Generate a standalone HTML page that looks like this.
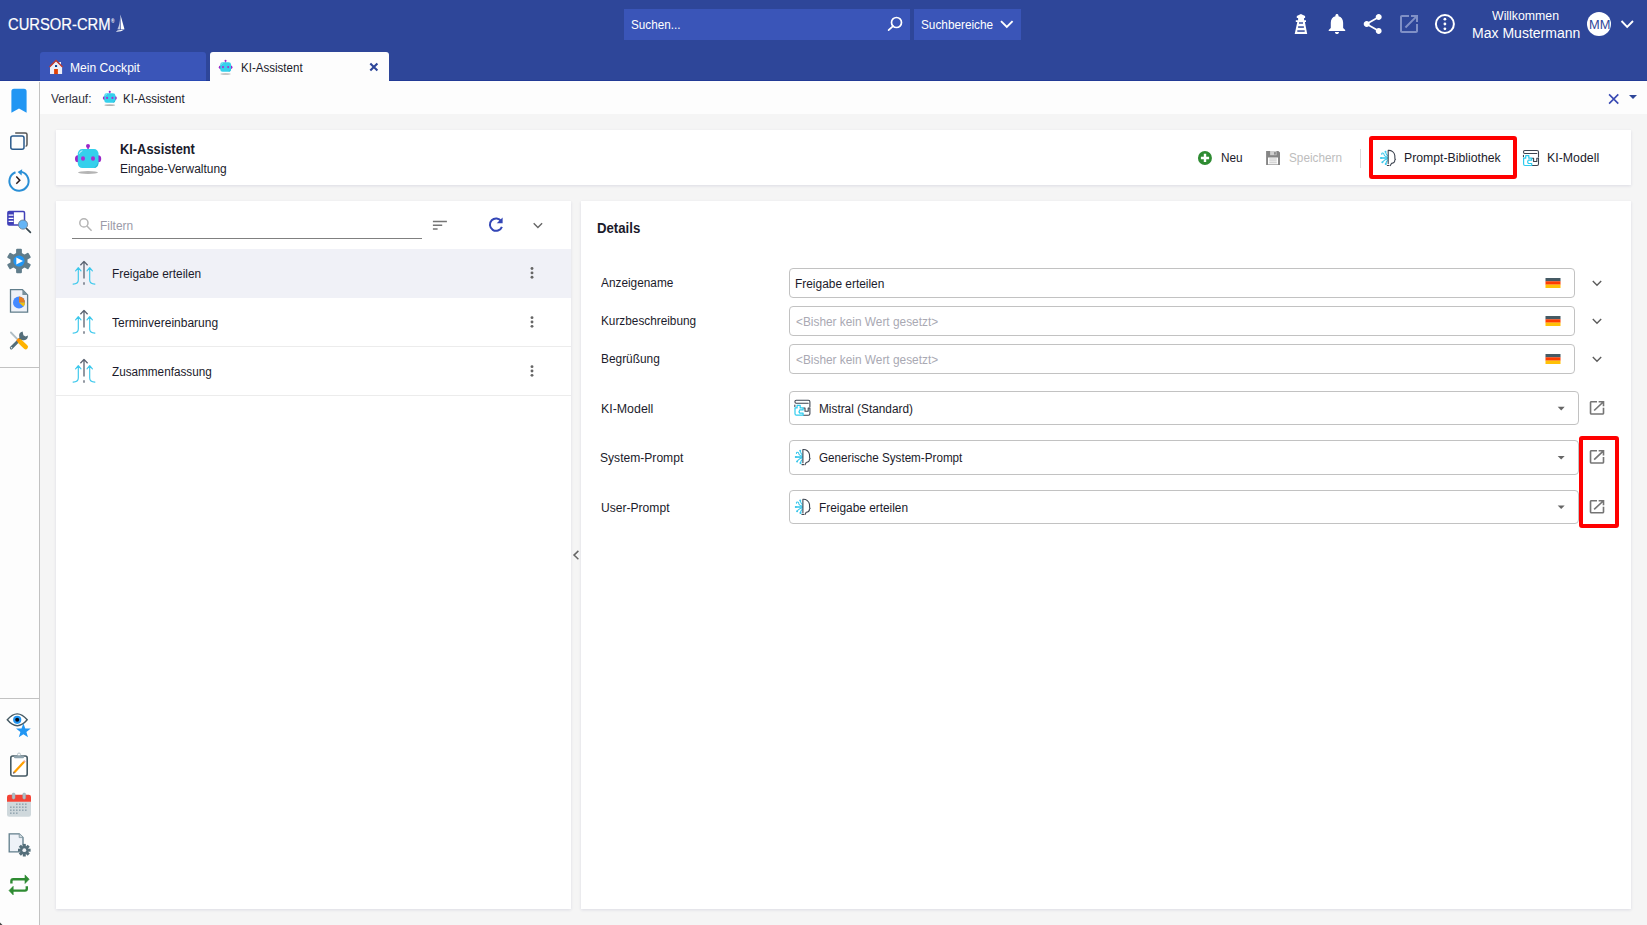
<!DOCTYPE html>
<html lang="de">
<head>
<meta charset="utf-8">
<title>CURSOR-CRM – KI-Assistent</title>
<style>
*{box-sizing:border-box;margin:0;padding:0}
html,body{width:1647px;height:925px;overflow:hidden}
body{font-family:"Liberation Sans",sans-serif;font-size:12.5px;color:#1b1b2b;background:#f5f5f5;position:relative}
.a{position:absolute}
.t{position:absolute;white-space:nowrap;line-height:20px;height:20px;transform-origin:0 0}
#ic{position:absolute;left:0;top:0;overflow:visible}
.inp{position:absolute;left:789px;border:1px solid #c2c2c2;border-radius:4px;background:#fff}
.pan{position:absolute;background:#fff;box-shadow:0 1px 3px rgba(20,20,90,.11)}
.red{position:absolute;border:4px solid #ff0000;border-radius:3px}
</style>
</head>
<body>
<div class="a" style="left:0;top:0;width:1647px;height:81px;background:#2e4699"></div>
<div class="a" style="left:624px;top:9px;width:286px;height:31px;background:#3a55b8"></div>
<div class="a" style="left:914px;top:9px;width:107px;height:31px;background:#3a55b8"></div>
<div class="a" style="left:1587.25px;top:12px;width:24px;height:24px;border-radius:50%;background:#fff"></div>
<div class="a" style="left:40px;top:52px;width:166px;height:29px;background:#3a55b8;border-radius:3px 3px 0 0"></div>
<div class="a" style="left:0;top:80px;width:1647px;height:1px;background:#223b96"></div>
<div class="a" style="left:40px;top:80px;width:166px;height:1px;background:#2a4ab4"></div>
<div class="a" style="left:210px;top:52px;width:179px;height:29px;background:#fdfdfd;border-radius:3px 3px 0 0"></div>
<div class="a" style="left:0;top:81px;width:39px;height:844px;background:#fdfdfd"></div>
<div class="a" style="left:39px;top:81px;width:1px;height:844px;background:#fdfdfd"></div>
<div class="a" style="left:39px;top:82px;width:1px;height:843px;background:#c2c2c2"></div>
<div class="a" style="left:0;top:367px;width:39px;height:1px;background:#c2c2c2"></div>
<div class="a" style="left:0;top:698px;width:39px;height:1px;background:#c2c2c2"></div>
<div class="a" style="left:40px;top:81px;width:1607px;height:32.7px;background:#fdfdfd"></div>
<div class="pan" style="left:56px;top:130px;width:1575px;height:55px"></div>
<div class="a" style="left:1360px;top:148.5px;width:1px;height:19px;background:#dcdcdc"></div>
<div class="pan" style="left:56px;top:201px;width:515px;height:708px"></div>
<div class="a" style="left:72.25px;top:238px;width:349.75px;height:1px;background:#808080"></div>
<div class="a" style="left:56px;top:249px;width:515px;height:49px;background:#f0f1f7"></div>
<div class="a" style="left:56px;top:346px;width:515px;height:1px;background:#ececec"></div>
<div class="a" style="left:56px;top:395px;width:515px;height:1px;background:#ececec"></div>
<div class="pan" style="left:581px;top:201px;width:1050px;height:708px"></div>
<div class="inp" style="top:268px;width:786px;height:30px"></div>
<div class="inp" style="top:306px;width:786px;height:30px"></div>
<div class="inp" style="top:344px;width:786px;height:30px"></div>
<div class="inp" style="top:391px;width:790px;height:34px"></div>
<div class="inp" style="top:440px;width:790px;height:34.5px"></div>
<div class="inp" style="top:490px;width:790px;height:34px"></div>
<div class="red" style="left:1368.5px;top:135.5px;width:148.75px;height:43.1px"></div>
<div class="red" style="left:1578.8px;top:435.7px;width:40.7px;height:92.7px"></div>
<div class="t" style="left:111px;top:12px;font-size:4.8px;font-weight:bold;color:#fff">®</div>

<svg id="ic" width="1647" height="925" viewBox="0 0 1647 925">
<defs>
<g id="bot">
 <ellipse cx="13" cy="28.5" rx="10" ry="1.5" fill="#b4b4b4"/>
 <rect x="12.3" y="2" width="1.5" height="4" fill="#9b27c8"/>
 <circle cx="13" cy="2.1" r="2" fill="#9b27c8"/>
 <ellipse cx="2.9" cy="14.7" rx="2.9" ry="3.5" fill="#9b27c8"/>
 <ellipse cx="23.3" cy="14.7" rx="2.9" ry="3.5" fill="#9b27c8"/>
 <rect x="2.8" y="5.1" width="20.7" height="18.9" rx="4.5" fill="#35d0ec"/>
 <path d="M18.5 24 Q23.5 23.5 23.5 17 Q22.5 22 18.5 24Z" fill="#27b2cf"/>
 <path d="M4.4 9.3 Q5 7.2 7 6.8" stroke="#fff" stroke-width="0.9" fill="none" stroke-linecap="round" opacity=".85"/>
 <ellipse cx="8" cy="14.45" rx="2" ry="2.2" fill="#a82fd0"/>
 <ellipse cx="18" cy="14.45" rx="2" ry="2.2" fill="#a82fd0"/>
</g>
<g id="prompt" fill="none" stroke-linecap="round" stroke-linejoin="round">
 <path d="M8 8 L1.4 8 M8 7 Q5.5 6.8 4.6 5 Q4.6 3 3 3.1 Q1.9 3.4 2.3 4.4 M8 9 Q5.5 9.2 3.4 11.6 M2.8 12.3 h0.1 M8 5.5 Q6.6 4.4 6.2 2.3 M6 1.6 h0.1 M8 10.5 Q6.8 11.6 6.4 13.3 M6.3 14.1 h0.1" stroke="#3cc8ec" stroke-width="1.05"/>
 <path d="M1.4 8 H7.6" stroke="#3cc8ec" stroke-width="1.5" opacity=".8"/>
 <circle cx="1.6" cy="8" r="1" fill="#3cc8ec" stroke="none"/><circle cx="2.9" cy="12.3" r="1" fill="#3cc8ec" stroke="none"/><circle cx="6" cy="1.7" r="1" fill="#3cc8ec" stroke="none"/><circle cx="6.3" cy="14" r="1.1" fill="#3cc8ec" stroke="none"/>
 <path d="M8.7 0.4 V13.6 M7.8 15.5 H9.4 M8.7 0.4 C12 0.1 15 2.4 15.3 5.5 L15.4 8.6 L15.9 9.6 L15.3 10 C15.4 12.2 14.5 13.2 12 13.4 L10.8 15.6" stroke="#3d4450" stroke-width="1.1"/>
</g>
<g id="kim" fill="none" stroke-linecap="round" stroke-linejoin="round" stroke-width="1.1">
 <path d="M2.3 1 H14.5 Q16 1 16 2.5 V7.5 M2.3 1 Q1 1 1 2.5 Q1 4 2.3 4 H14.3 M0.95 5.9 V7.3 M16 8.8 H14.3 V12 H11.1 V8.8 H9.7 M16 8.8 V14.5 Q16 16 14.5 16 H9.7" stroke="#3d4450"/>
 <path d="M1.1 8.7 H3.2 V6.1 H6.3 V8.7 H9.2 V10.7 H5.9 Q4.5 12.3 5.9 14 H9.2 V16 H2.5 Q1.1 16 1.1 14.5 Z" stroke="#2ecbee" stroke-width="1.2"/>
</g>
<g id="arrows" fill="none" stroke-linecap="round" stroke-linejoin="round">
 <path d="M5.6 7.2 V19 Q5.6 23 0.4 23.1 M2.9 9.8 L5.6 6.6 L8.3 9.8 M17 7.2 V19 Q17 23 22.2 23.1 M14.3 9.8 L17 6.6 L19.7 9.8" stroke="#3cc8ec" stroke-width="1.15"/>
 <path d="M11.3 1 V17.6 M11.3 21.2 V23.8 M7.7 4.3 L11.3 0.4 L14.9 4.3" stroke="#5a6270" stroke-width="1.3" stroke-linecap="butt"/>
</g>
<g id="oin"><path d="M19 19H5V5h7V3H5c-1.11 0-2 .9-2 2v14c0 1.1.89 2 2 2h14c1.1 0 2-.9 2-2v-7h-2v7zM14 3v2h3.59l-9.83 9.83 1.41 1.41L19 6.41V10h2V3h-7z"/></g>
<g id="flag"><rect width="15" height="3.4" fill="#455a64"/><rect y="3.3" width="15" height="3.4" fill="#ff3d00"/><rect y="6.6" width="15" height="3.4" fill="#ffc107"/></g>
<g id="dots" fill="#666"><circle cx="0" cy="-4.35" r="1.45"/><circle cx="0" cy="0" r="1.45"/><circle cx="0" cy="4.35" r="1.45"/></g>
</defs>

<!-- logo: registered mark + sailboat -->
<path d="M120.4 14.4 L124.4 29.1 L121 29.6 Z" fill="#fff"/>
<path d="M120.1 17.5 Q119.8 25 117.4 29.2 L120.4 29.5 Z" fill="#fff" opacity=".7"/>
<path d="M115.9 31.7 Q121 31.8 125 29.2 Q121 30.3 117.5 30.5 Z" fill="#fff"/>

<!-- search icon + chevrons -->
<g fill="none" stroke="#fff" stroke-width="1.7"><circle cx="896.5" cy="22.5" r="5"/><path d="M893 26.1 L888.6 30.2" stroke-linecap="round"/></g>
<path d="M1001 21.2 L1006.8 27 L1012.6 21.2" fill="none" stroke="#fff" stroke-width="1.9"/>
<path d="M1621.5 21 L1627.2 26.8 L1633 21" fill="none" stroke="#fff" stroke-width="1.9"/>

<!-- header icons -->
<g fill="#fff">
 <path d="M1300.9 13.9 L1305.1 16 V18 H1304.1 V20.2 H1306 V22 H1304.9 L1307.2 33.9 H1294.7 L1297.3 22 H1295.8 V20.2 H1298.1 V18 H1296.8 V16 Z"/>
</g>
<g fill="#2e4699"><rect x="1299" y="22.3" width="4" height="1.4"/><rect x="1298.1" y="26.3" width="5.8" height="1.5"/><rect x="1297.3" y="30.3" width="7.4" height="1.5"/></g>
<g transform="translate(1324.6 11.4) scale(1.03)" fill="#fff"><path d="M12 22c1.1 0 2-.9 2-2h-4c0 1.1.89 2 2 2zm6-6v-5c0-3.07-1.64-5.64-4.5-6.32V4c0-.83-.67-1.5-1.5-1.5s-1.5.67-1.5 1.5v.68C7.63 5.36 6 7.92 6 11v5l-2 2v1h16v-1l-2-2z"/></g>
<g transform="translate(1360.7 12)" fill="#fff"><path d="M18 16.08c-.76 0-1.44.3-1.96.77L8.910 12.700c.05-.23.09-.46.09-.7s-.04-.47-.09-.7l7.050-4.110c.54.5 1.250.810 2.040.810 1.660 0 3-1.340 3-3s-1.340-3-3-3-3 1.340-3 3c0 .24.040.47.090.7L8.040 9.810C7.500 9.310 6.790 9 6 9c-1.660 0-3 1.340-3 3s1.340 3 3 3c.79 0 1.500-.31 2.040-.81l7.120 4.160c-.05.21-.08.43-.08.65 0 1.610 1.310 2.920 2.920 2.920 1.610 0 2.920-1.310 2.920-2.920s-1.310-2.920-2.920-2.920z"/></g>
<g transform="translate(1397 11.9)" fill="#8090c6"><use href="#oin"/></g>
<circle cx="1444.9" cy="24" r="9" fill="none" stroke="#fff" stroke-width="2"/>
<g fill="#fff"><circle cx="1444.9" cy="19.2" r="1.4"/><circle cx="1444.9" cy="24" r="1.4"/><circle cx="1444.9" cy="28.8" r="1.4"/></g>

<!-- tab icons -->
<g>
 <path d="M50 66.8 L56 61 L62.1 66.8 V74.1 H50 Z" fill="#ecedf8"/>
 <rect x="59.2" y="62" width="1.8" height="3" fill="#ecedf8"/>
 <path d="M49.5 66.9 L56 60.5 L62.6 66.9" fill="none" stroke="#c23a2e" stroke-width="1.4" stroke-linejoin="miter"/>
 <rect x="55" y="65.1" width="2.1" height="1.9" fill="#003c8f"/>
 <rect x="54.1" y="69" width="3.8" height="5.1" fill="#e04006"/>
</g>
<use href="#bot" transform="translate(218.8 59.8) scale(0.52 0.50)"/>
<path d="M370.3 63.6 L377.4 70.6 M377.4 63.6 L370.3 70.6" stroke="#2e4699" stroke-width="2.1"/>
<use href="#bot" transform="translate(102.8 90.6) scale(0.535 0.51)"/>
<path d="M1609.1 94.4 L1618.3 103.6 M1618.3 94.4 L1609.1 103.6" stroke="#3849b3" stroke-width="1.6"/>
<path d="M1629 94.9 H1637 L1633 98.9 Z" fill="#2e4699"/>

<!-- card -->
<use href="#bot" transform="translate(75 144)"/>
<circle cx="1204.95" cy="157.95" r="7" fill="#2e8b32"/>
<path d="M1200.9 157.95 H1209.1 M1205 153.85 V162.05" stroke="#fff" stroke-width="2.4"/>
<g>
 <path d="M1266.1 151 H1278.4 L1280 152.6 V164.9 H1266.1 Z" fill="#858585"/>
 <rect x="1270.1" y="151" width="6.4" height="4.2" fill="#cfcfcf"/>
 <rect x="1274.3" y="152.1" width="1.3" height="2.5" fill="#707070"/>
 <rect x="1268" y="157.5" width="10" height="6.9" fill="#fff"/>
 <path d="M1269.3 159 H1276.8 M1269.3 160.9 H1276.8 M1269.3 162.8 H1276.8" stroke="#bdbdbd" stroke-width="0.9"/>
</g>
<use href="#prompt" transform="translate(1379.5 150)"/>
<use href="#kim" transform="translate(1522.5 149.5)"/>

<!-- left panel -->
<g fill="none" stroke="#b4b4b4" stroke-width="1.5"><circle cx="83.9" cy="222.9" r="4.1"/><path d="M86.9 226 L91.6 230.7" stroke-linecap="butt"/></g>
<path d="M432.9 221.6 H446.9 M432.9 225.3 H442.2 M432.9 229 H437.6" stroke="#757575" stroke-width="1.5"/>
<g fill="none" stroke="#3346b6" stroke-width="2"><path d="M501.3 221.2 A6.2 6.2 0 1 0 501.9 226.8"/></g>
<path d="M502.6 217.4 V223.3 H496.7 Z" fill="#3346b6"/>
<path d="M533.7 223.2 L537.9 227.4 L542.1 223.2" fill="none" stroke="#666" stroke-width="1.4"/>
<use href="#arrows" transform="translate(72.7 261)"/>
<use href="#arrows" transform="translate(72.7 310)"/>
<use href="#arrows" transform="translate(72.7 359)"/>
<use href="#dots" transform="translate(532 272.9)"/>
<use href="#dots" transform="translate(532 322)"/>
<use href="#dots" transform="translate(532 371)"/>
<path d="M578.4 550.9 L574 555.1 L578.4 559.3" fill="none" stroke="#666" stroke-width="1.5"/>

<!-- right panel -->
<use href="#flag" transform="translate(1545.5 278)"/>
<use href="#flag" transform="translate(1545.5 316)"/>
<use href="#flag" transform="translate(1545.5 354)"/>
<g fill="none" stroke="#5c5c5c" stroke-width="1.4">
 <path d="M1592.8 281.1 L1597 285.3 L1601.2 281.1"/>
 <path d="M1592.8 319.1 L1597 323.3 L1601.2 319.1"/>
 <path d="M1592.8 357.1 L1597 361.3 L1601.2 357.1"/>
</g>
<g fill="#666">
 <path d="M1557.7 406.8 H1564.7 L1561.2 410.4 Z"/>
 <path d="M1557.7 456 H1564.7 L1561.2 459.6 Z"/>
 <path d="M1557.7 505.4 H1564.7 L1561.2 509 Z"/>
</g>
<g fill="#757575">
 <use href="#oin" transform="translate(1587.3 398.7) scale(0.81 0.76)"/>
 <use href="#oin" transform="translate(1587.3 447.8) scale(0.81 0.76)"/>
 <use href="#oin" transform="translate(1587.3 497.6) scale(0.81 0.76)"/>
</g>
<use href="#kim" transform="translate(793.9 399.2)"/>
<use href="#prompt" transform="translate(794.2 449.1)"/>
<use href="#prompt" transform="translate(794.2 498.9)"/>

<!-- sidebar icons -->
<path d="M11.4 91.4 Q11.4 88.8 14 88.8 H24 Q26.6 88.8 26.6 91.4 V112.7 L19 108.4 L11.4 112.7 Z" fill="#2196f3"/>
<g fill="none" stroke-width="1.5">
 <path d="M15.2 132.9 H25.3 Q27 132.9 27 134.6 V144.5 Q27 146.2 25.6 146.2" stroke="#555"/>
 <rect x="10.8" y="135.9" width="13.2" height="13.3" rx="2" stroke="#2a5a8c"/>
</g>
<g fill="none">
 <path d="M15.5 172.2 A9.6 9.6 0 1 0 21.6 171.9" stroke="#2a8fd6" stroke-width="2"/>
 <path d="M22.2 169.2 L17.6 172 L21.6 175.6 Z" fill="#2a8fd6"/>
 <path d="M16.3 176.6 L19.8 180.2 L16.3 183.8" stroke="#2b1a1a" stroke-width="1.5"/>
</g>
<g>
 <rect x="7.9" y="211.5" width="16.6" height="13.4" rx="1.2" fill="#fff" stroke="#4040b8" stroke-width="1.5"/>
 <rect x="7.9" y="211.5" width="6" height="13.4" fill="#4040b8"/>
 <path d="M8.6 215.2 H13.4 M8.6 218.3 H13.4 M8.6 221.4 H13.4" stroke="#fff" stroke-width="1.2"/>
 <path d="M26.6 228.6 L30.4 232.4" stroke="#37474f" stroke-width="1.7" stroke-linecap="round"/>
 <circle cx="23" cy="224.6" r="4.6" fill="#64b5f6" stroke="#6d7a85" stroke-width="0.8"/>
</g>
<g transform="translate(19 261)">
 <g fill="#607d8b">
  <circle r="8.6"/>
  <rect x="-2.9" y="-12.2" width="5.8" height="24.4" rx="1"/>
  <rect x="-2.9" y="-12.2" width="5.8" height="24.4" rx="1" transform="rotate(60)"/>
  <rect x="-2.9" y="-12.2" width="5.8" height="24.4" rx="1" transform="rotate(120)"/>
 </g>
 <circle r="5.6" fill="#2196f3"/>
 <path d="M-2.7 -3.6 L4 0 L-2.7 3.6 Z" fill="#fff"/>
</g>
<g>
 <path d="M10.5 289.6 H22.4 L27.6 294.9 V312.2 H10.5 Z" fill="#eef2f8" stroke="#607d8b" stroke-width="1.3"/>
 <path d="M22.4 289.3 L28 295 H22.4 Z" fill="#78909c"/>
 <circle cx="19" cy="302.4" r="6" fill="#448aff"/>
 <path d="M19 302.4 V296.4 A6 6 0 0 1 25 302.4 Z" fill="#e67e22"/>
 <path d="M19 302.4 H25 A6 6 0 0 1 23.4 306.5 Z" fill="#f4c20d"/>
</g>
<g stroke-linecap="round">
 <path d="M11.3 347.9 L21.2 338" stroke="#546e7a" stroke-width="3"/>
 <path d="M27.9 335.6 A4.4 4.4 0 1 1 22.6 331.6 L23.4 335.2 L25.6 336.6 Z" fill="#546e7a"/>
 <circle cx="11.5" cy="347.8" r="0.8" fill="#eceff1"/>
 <path d="M10.9 332.5 L17.6 339.3" stroke="#b0bec5" stroke-width="1.8"/>
 <path d="M19.9 341.5 L25.7 347" stroke="#ffb300" stroke-width="4.6"/>
 <path d="M17.4 339.2 L19.4 341.1" stroke="#ff8f00" stroke-width="3.4" stroke-linecap="butt"/>
</g>
<g>
 <path d="M7.3 719.8 Q17.2 708 27.2 719.8 Q17.2 731.6 7.3 719.8 Z" fill="#fff" stroke="#455a64" stroke-width="1.4"/>
 <circle cx="17.2" cy="719.8" r="4.1" fill="#2196f3"/>
 <circle cx="17.2" cy="719.8" r="2" fill="#0b0b14"/>
 <path d="M23.4 723.2 L25.3 728.4 L30.8 728.6 L26.4 732.0 L28.0 737.3 L23.4 734.2 L18.8 737.3 L20.4 732.0 L16.0 728.6 L21.5 728.4 Z" fill="#2196f3"/>
</g>
<g>
 <rect x="10.8" y="756" width="16.4" height="20" rx="2" fill="#fff" stroke="#455a64" stroke-width="1.6"/>
 <circle cx="19" cy="754.5" r="1.5" fill="#fdfdfd" stroke="#b0bec5" stroke-width="0.9"/>
 <rect x="14" y="755.5" width="10" height="2.8" rx="1" fill="#90a4ae"/>
 <path d="M13.6 771.6 L23.3 761 L24.9 762.5 L15.2 773 Z" fill="#ffa000"/>
 <path d="M13.6 771.6 L15.2 773 L13 773.8 Z" fill="#5d4037"/>
 <path d="M23.3 761 L24.1 760.1 L25.7 761.6 L24.9 762.5 Z" fill="#ef9a9a"/>
</g>
<g>
 <path d="M7 802 H31 V814.6 Q31 816.8 28.8 816.8 H9.2 Q7 816.8 7 814.6 Z" fill="#cfd8dc"/>
 <path d="M7 797 Q7 794.8 9.2 794.8 H28.8 Q31 794.8 31 797 V802 H7 Z" fill="#f44336"/>
 <rect x="7" y="801.6" width="24" height="0.6" fill="#e0f2f1" opacity=".6"/>
 <rect x="12.1" y="793" width="3" height="6.2" rx="1.4" fill="#b0bec5" stroke="#90a4ae" stroke-width="0.4"/>
 <rect x="22.7" y="793" width="3" height="6.2" rx="1.4" fill="#b0bec5" stroke="#90a4ae" stroke-width="0.4"/>
 <g fill="#90a4ae"><rect x="16.05" y="803.45" width="1.5" height="1.5"/><rect x="19.05" y="803.45" width="1.5" height="1.5"/><rect x="22.05" y="803.45" width="1.5" height="1.5"/><rect x="25.05" y="803.45" width="1.5" height="1.5"/><rect x="10.05" y="806.45" width="1.5" height="1.5"/><rect x="13.05" y="806.45" width="1.5" height="1.5"/><rect x="16.05" y="806.45" width="1.5" height="1.5"/><rect x="19.05" y="806.45" width="1.5" height="1.5"/><rect x="22.05" y="806.45" width="1.5" height="1.5"/><rect x="25.05" y="806.45" width="1.5" height="1.5"/><rect x="10.05" y="809.45" width="1.5" height="1.5"/><rect x="13.05" y="809.45" width="1.5" height="1.5"/><rect x="16.05" y="809.45" width="1.5" height="1.5"/><rect x="19.05" y="809.45" width="1.5" height="1.5"/><rect x="22.05" y="809.45" width="1.5" height="1.5"/><rect x="25.05" y="809.45" width="1.5" height="1.5"/><rect x="10.05" y="812.45" width="1.5" height="1.5"/><rect x="13.05" y="812.45" width="1.5" height="1.5"/><rect x="16.05" y="812.45" width="1.5" height="1.5"/></g>
</g>
<g>
 <path d="M9.2 833.8 H19.2 L23 837.6 V851.8 H9.2 Z" fill="#eef2f8" stroke="#607d8b" stroke-width="1.3"/>
 <path d="M19.2 833.8 V837.6 H23" fill="#cfd8dc" stroke="#78909c" stroke-width="0.8"/>
 <g transform="translate(24.3 850.2)" fill="#546e7a">
  <circle r="4.6" stroke="#fdfdfd" stroke-width="0.8"/>
  <rect x="-1.5" y="-6.3" width="3" height="12.6"/>
  <rect x="-1.5" y="-6.3" width="3" height="12.6" transform="rotate(45)"/>
  <rect x="-1.5" y="-6.3" width="3" height="12.6" transform="rotate(90)"/>
  <rect x="-1.5" y="-6.3" width="3" height="12.6" transform="rotate(135)"/>
  <circle r="1.9" fill="#eef1f6"/>
 </g>
</g>
<g fill="none" stroke="#2e8b32" stroke-width="2.4">
 <path d="M11.4 883.6 V881 Q11.4 879.2 13.2 879.2 H25.5"/>
 <path d="M26.8 886.2 V888.8 Q26.8 890.6 25 890.6 H12.7"/>
 <path d="M25 874.9 L29.2 879.2 L25 883.5 Z" fill="#2e8b32" stroke-width="0.6"/>
 <path d="M13.2 886.3 L9 890.6 L13.2 894.9 Z" fill="#2e8b32" stroke-width="0.6"/>
</g>
<path d="M0 922.5 L2.5 925 H0 Z" fill="#444"/>

</svg>
<div class="t" style="left:7.78px;top:14px;font-size:16.5px;color:#ffffff;transform:scaleX(0.8953);-webkit-text-stroke:0.2px #fff">CURSOR-CRM</div>
<div class="t" style="left:630.91px;top:15px;font-size:12.5px;color:#ffffff;transform:scaleX(0.9351)">Suchen...</div>
<div class="t" style="left:920.60px;top:15px;font-size:12.5px;color:#ffffff;transform:scaleX(0.9438)">Suchbereiche</div>
<div class="t" style="left:1491.96px;top:6px;font-size:12.5px;color:#ffffff;transform:scaleX(0.9854)">Willkommen</div>
<div class="t" style="left:1471.55px;top:23px;font-size:14px;color:#ffffff;transform:scaleX(1.0018)">Max Mustermann</div>
<div class="t" style="left:1588.61px;top:15px;font-size:12.5px;color:#2e4699;transform:scaleX(1.0264)">MM</div>
<div class="t" style="left:70.43px;top:58px;font-size:12.5px;color:#ffffff;transform:scaleX(0.9677)">Mein Cockpit</div>
<div class="t" style="left:240.96px;top:58px;font-size:12.5px;color:#1b1b2b;transform:scaleX(0.9240)">KI-Assistent</div>
<div class="t" style="left:50.92px;top:89px;font-size:12.5px;color:#333340;transform:scaleX(0.9557)">Verlauf:</div>
<div class="t" style="left:123.46px;top:89px;font-size:12.5px;color:#1b1b2b;transform:scaleX(0.9240)">KI-Assistent</div>
<div class="t" style="left:120.30px;top:139px;font-size:14px;color:#1b1b2b;transform:scaleX(0.9168);font-weight:700">KI-Assistent</div>
<div class="t" style="left:120.20px;top:159px;font-size:12.5px;color:#1b1b2b;transform:scaleX(0.9532)">Eingabe-Verwaltung</div>
<div class="t" style="left:1221.41px;top:148px;font-size:12.5px;color:#1b1b2b;transform:scaleX(0.9436)">Neu</div>
<div class="t" style="left:1288.61px;top:148px;font-size:12.5px;color:#bdbdbd;transform:scaleX(0.9408)">Speichern</div>
<div class="t" style="left:1404.42px;top:148px;font-size:12.5px;color:#1b1b2b;transform:scaleX(0.9806)">Prompt-Bibliothek</div>
<div class="t" style="left:1547.34px;top:148px;font-size:12.5px;color:#1b1b2b;transform:scaleX(0.9880)">KI-Modell</div>
<div class="t" style="left:100.30px;top:216px;font-size:12.5px;color:#9b9ba8;transform:scaleX(0.9530)">Filtern</div>
<div class="t" style="left:112.20px;top:264px;font-size:12.5px;color:#1b1b2b;transform:scaleX(0.9505)">Freigabe erteilen</div>
<div class="t" style="left:112.17px;top:313px;font-size:12.5px;color:#1b1b2b;transform:scaleX(0.9605)">Terminvereinbarung</div>
<div class="t" style="left:112.09px;top:362px;font-size:12.5px;color:#1b1b2b;transform:scaleX(0.9381)">Zusammenfassung</div>
<div class="t" style="left:597.27px;top:218px;font-size:14px;color:#1b1b2b;transform:scaleX(0.9428);font-weight:700">Details</div>
<div class="t" style="left:600.79px;top:273px;font-size:12.5px;color:#1b1b2b;transform:scaleX(0.9466)">Anzeigename</div>
<div class="t" style="left:600.79px;top:311px;font-size:12.5px;color:#1b1b2b;transform:scaleX(0.9437)">Kurzbeschreibung</div>
<div class="t" style="left:600.80px;top:349px;font-size:12.5px;color:#1b1b2b;transform:scaleX(0.9501)">Begrüßung</div>
<div class="t" style="left:600.74px;top:399px;font-size:12.5px;color:#1b1b2b;transform:scaleX(0.9900)">KI-Modell</div>
<div class="t" style="left:599.98px;top:448px;font-size:12.5px;color:#1b1b2b;transform:scaleX(0.9666)">System-Prompt</div>
<div class="t" style="left:600.75px;top:498px;font-size:12.5px;color:#1b1b2b;transform:scaleX(0.9667)">User-Prompt</div>
<div class="t" style="left:795.00px;top:274px;font-size:12.5px;color:#1b1b2b;transform:scaleX(0.9527)">Freigabe erteilen</div>
<div class="t" style="left:795.60px;top:312px;font-size:12.5px;color:#a9a9b3;transform:scaleX(0.9483)">&lt;Bisher kein Wert gesetzt&gt;</div>
<div class="t" style="left:795.60px;top:350px;font-size:12.5px;color:#a9a9b3;transform:scaleX(0.9483)">&lt;Bisher kein Wert gesetzt&gt;</div>
<div class="t" style="left:819.11px;top:399px;font-size:12.5px;color:#1b1b2b;transform:scaleX(0.9458)">Mistral (Standard)</div>
<div class="t" style="left:818.78px;top:448px;font-size:12.5px;color:#1b1b2b;transform:scaleX(0.9337)">Generische System-Prompt</div>
<div class="t" style="left:819.10px;top:498px;font-size:12.5px;color:#1b1b2b;transform:scaleX(0.9494)">Freigabe erteilen</div>
</body>
</html>
